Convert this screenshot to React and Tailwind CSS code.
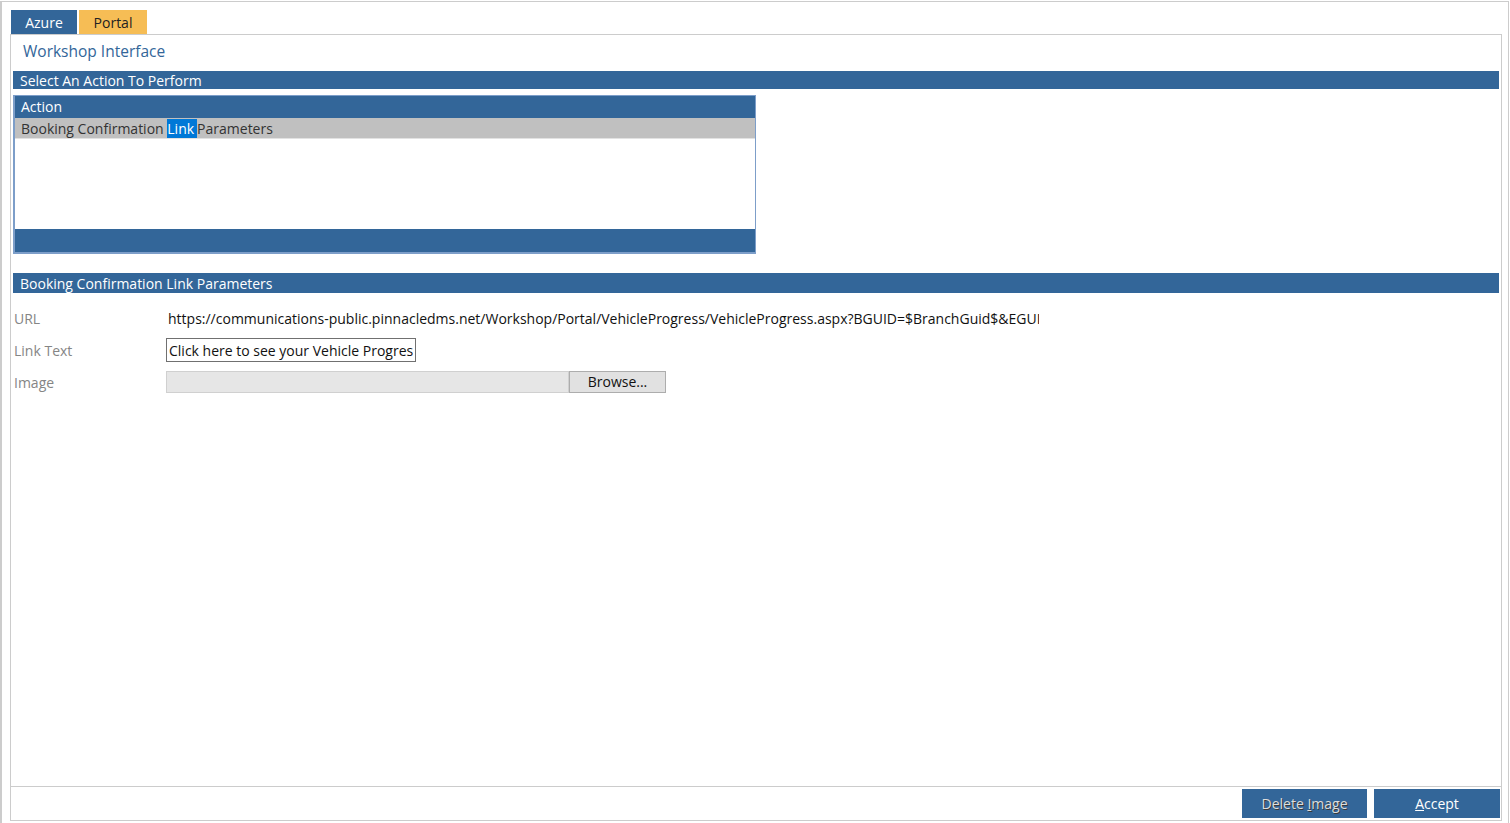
import { useState } from 'react'

const blue = 'bg-[#336699]'

function SectionBar({ children }) {
  return (
    <div className={`${blue} h-[20px] pl-[7px] text-[14px] leading-[21px] text-white`}>
      {children}
    </div>
  )
}

export default function App() {
  const [linkText, setLinkText] = useState('Click here to see your Vehicle Progress')

  return (
    <div className="h-[823px] w-[1510px] overflow-hidden bg-white font-['Open_Sans','Noto_Sans',sans-serif] text-[14px]">
      <div className="mt-px flex h-[822px] w-[1509px] flex-col border-l-2 border-r border-t border-[#cccccc] pl-[8px] pt-[8px]">
        {/* Tabs */}
        <div className="flex h-[25px] gap-[2px] pl-px">
          <div className={`${blue} w-[66px] pt-px text-center leading-[24px] text-white`}>Azure</div>
          <div className="w-[68px] bg-[#f6bd55] pt-px text-center leading-[24px] text-[#222]">Portal</div>
        </div>

        {/* Panel */}
        <div className="-mt-px flex h-[787px] w-[1492px] flex-col border border-[#cccccc]">
          <div className="flex-1 px-[2px]">
            <div className="h-[36px] pl-[10px] pt-[5px] text-[15.5px] leading-[22px] text-[#336699]">
              Workshop Interface
            </div>

            <div className={`${blue} h-[18px] pl-[7px] leading-[19px] text-white`}>Select An Action To Perform</div>

            {/* Action grid */}
            <div className="mt-[6px] w-[743px] border border-l-2 border-b-2 border-[#7d9ec9]">
              <div className={`${blue} h-[22px] pl-[6px] leading-[22px] text-white`}>Action</div>
              <div className="h-[21px] border-b border-[#e2e2e2] bg-[#c0c0c0] pl-[6px] leading-[21px] text-[#333]">
                Booking Confirmation <span className="bg-[#0078d7] pr-[3px] text-white">Link</span>Parameters
              </div>
              <div className="h-[90px] bg-white" />
              <div className={`${blue} h-[23px]`} />
            </div>

            <div className="mt-[19px]">
              <SectionBar>Booking Confirmation Link Parameters</SectionBar>
            </div>

            {/* Params */}
            <div className="mt-[13px] flex flex-col pl-px">
              <div className="flex h-[24px] items-center">
                <div className="w-[153px] text-[#858585]">URL</div>
                <div className="w-[872px] overflow-hidden whitespace-nowrap pl-[1px] text-[#111]">
                  https://communications-public.pinnacledms.net/Workshop/Portal/VehicleProgress/VehicleProgress.aspx?BGUID=$BranchGuid$&amp;EGUID=$EnquiryGuid$
                </div>
              </div>
              <div className="mt-[8px] flex h-[24px] items-center">
                <div className="w-[152px] text-[#858585]">Link Text</div>
                <input
                  value={linkText}
                  onChange={(e) => setLinkText(e.target.value)}
                  className="h-[24px] w-[250px] border border-[#707070] bg-white px-[2px] text-[14px] text-[#111] outline-none"
                />
              </div>
              <div className="mt-[9px] flex h-[22px] items-center">
                <div className="w-[152px] text-[#858585]">Image</div>
                <div className="h-[22px] w-[403px] border border-[#d0d0d0] bg-[#e6e6e6]" />
                <button className="h-[22px] w-[97px] border border-[#adadad] bg-[#e1e1e1] text-[14px] leading-[20px] text-[#111]">
                  Browse...
                </button>
              </div>
            </div>
          </div>

          {/* Footer */}
          <div className="flex h-[34px] justify-end gap-[7px] border-t border-[#cccccc] pr-px pt-[2px]">
            <button className={`${blue} h-[29px] w-[125px] text-[14px] text-[#dcdcdc] [text-shadow:1px_1px_0_#3a3a3a]`}>
              Delete <span className="underline">I</span>mage
            </button>
            <button className={`${blue} h-[29px] w-[126px] text-[14px] text-white`}>
              <span className="underline">A</span>ccept
            </button>
          </div>
        </div>
      </div>
    </div>
  )
}
